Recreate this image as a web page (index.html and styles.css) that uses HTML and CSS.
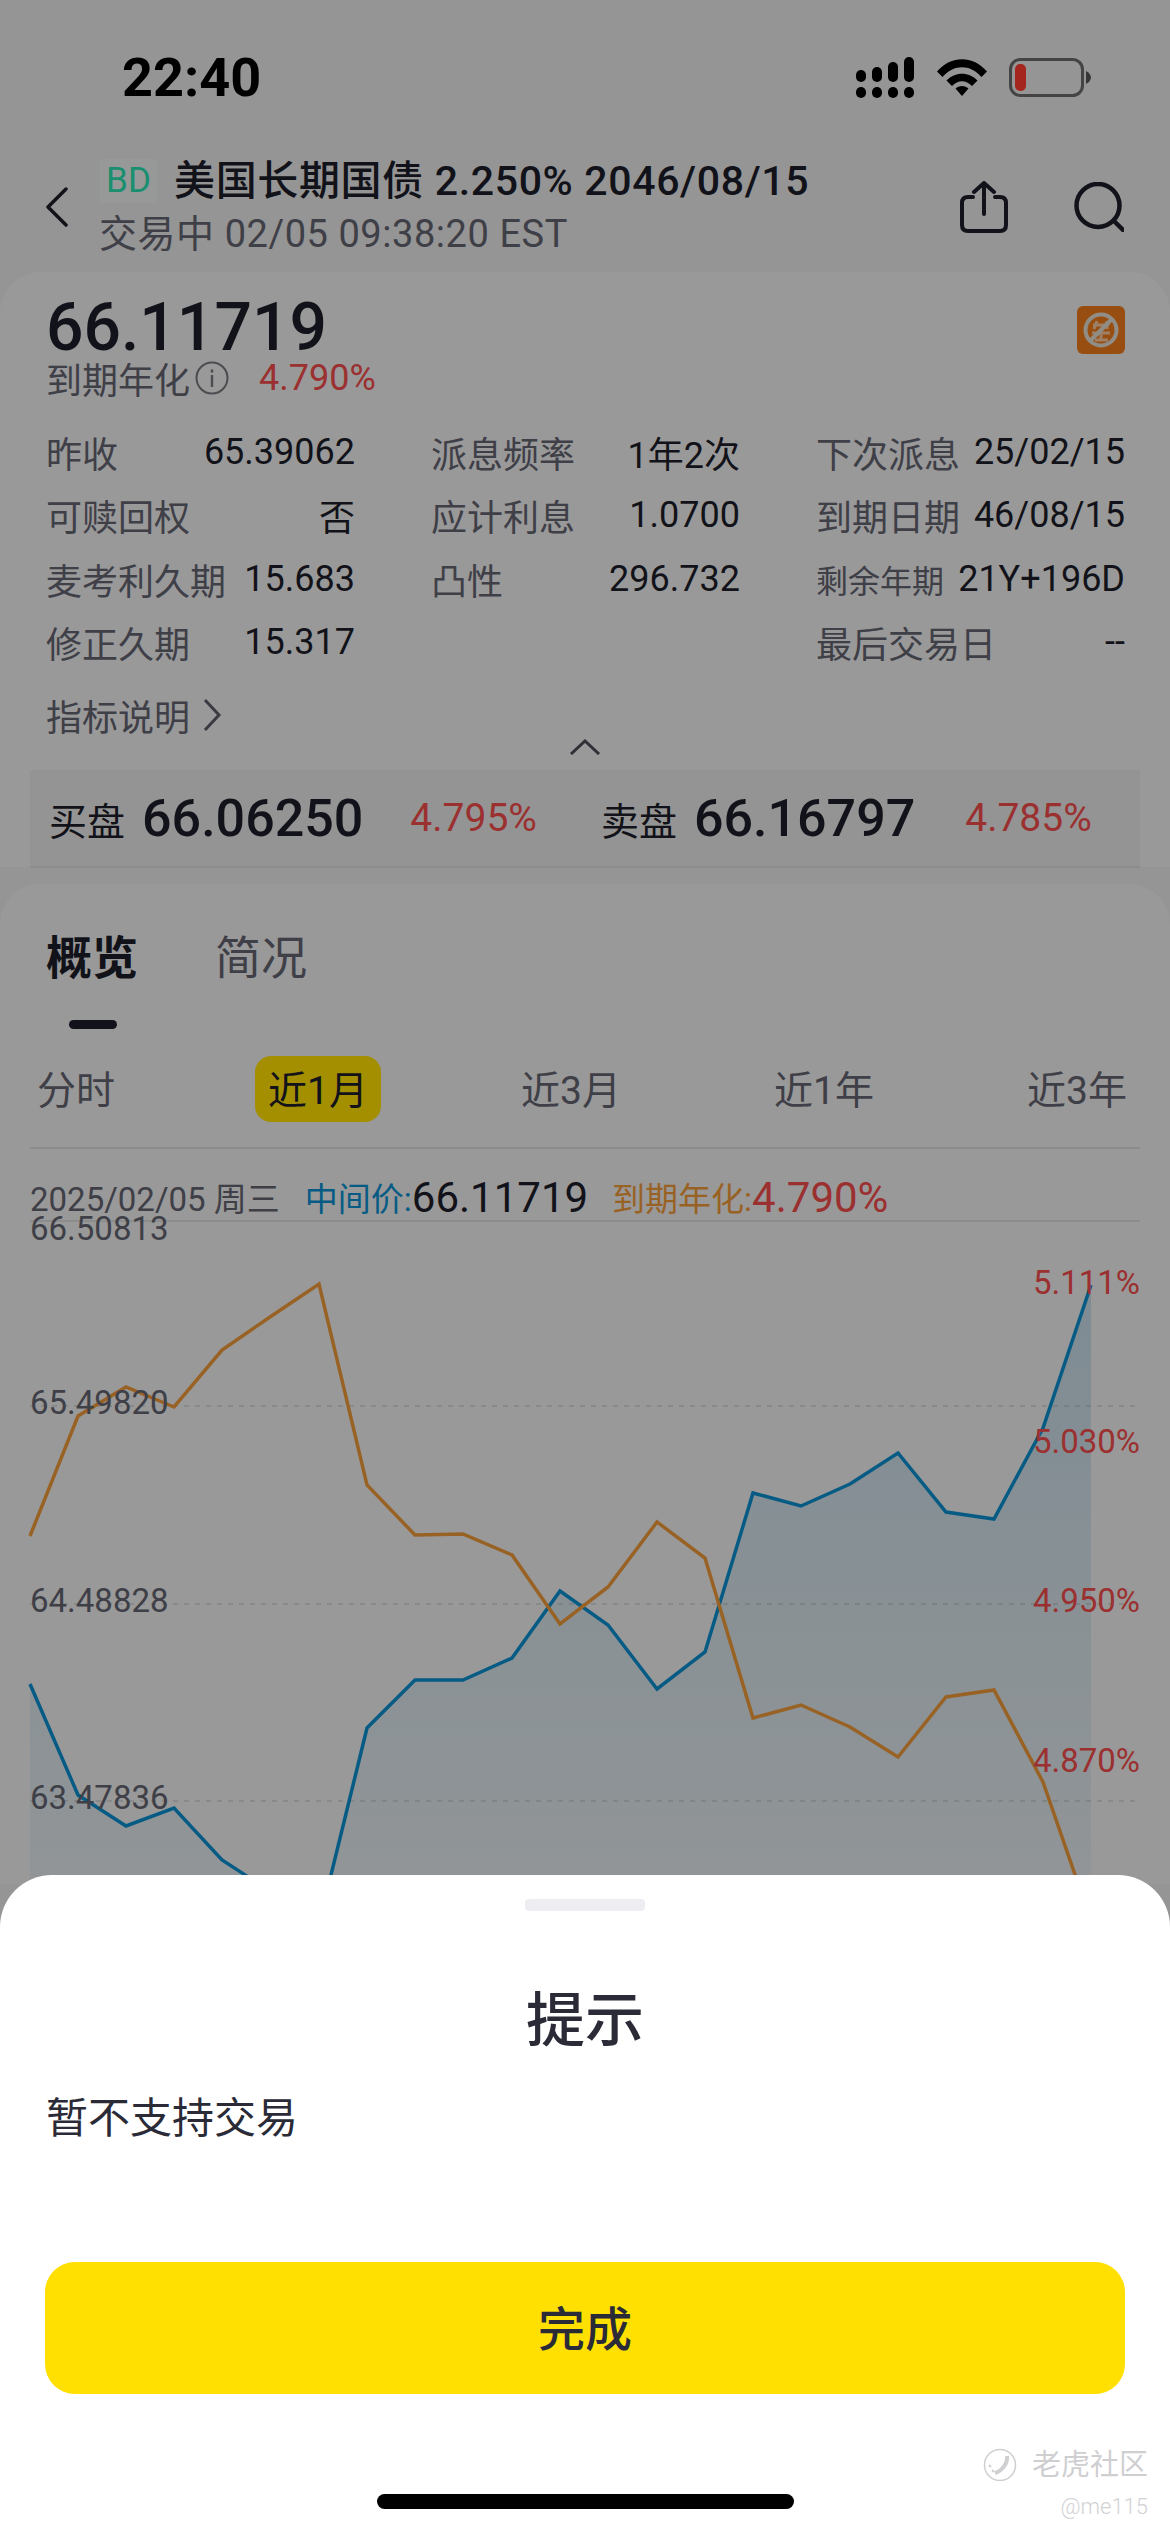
FILE: index.html
```html
<!DOCTYPE html>
<html lang="zh-CN">
<head>
  <meta charset="UTF-8">
  <title>美国长期国债 2.250% 2046/08/15</title>
  <meta name="viewport" content="width=device-width,initial-scale=1">
  <link rel="stylesheet" href="styles.css">
</head>
<body>
  <div class="status">
    <div class="time">22:40</div>
    <div class="status-icons">
      <svg class="signal" width="58" height="41" viewBox="0 0 58 41">
        <rect x="0" y="13" width="10" height="12" rx="5"/><rect x="16" y="10" width="10" height="15" rx="5"/><rect x="32" y="5" width="10" height="20" rx="5"/><rect x="48" y="0" width="10" height="25" rx="5"/>
        <rect x="0" y="30" width="10" height="11" rx="5"/><rect x="16" y="30" width="10" height="11" rx="5"/><rect x="32" y="30" width="10" height="11" rx="5"/><rect x="48" y="30" width="10" height="11" rx="5"/>
      </svg>
      <svg class="wifi" width="50" height="37" viewBox="0 0 50 37">
        <path d="M0 12.5C14 -4 36 -4 50 12.5L44.5 18C33 5 17 5 5.500 18Z"/>
        <path d="M9.500 21.500C18 12.500 32 12.500 40.500 21.500L35 27C29 20.500 21 20.500 15 27Z"/>
        <path d="M18.500 29.500C22 26 28 26 31.500 29.500L25 37Z"/>
      </svg>
      <svg class="battery" width="82" height="39" viewBox="0 0 82 39">
        <rect x="1.500" y="1.500" width="72" height="36" rx="10" fill="none" stroke="#6b6b6b" stroke-width="3"/>
        <rect x="6" y="6" width="11" height="27" rx="5" fill="#ff3b30"/>
        <path d="M77 13C80 14.500 82 17 82 19.500C82 22 80 24.500 77 26Z" fill="#555"/>
      </svg>
    </div>
  </div>

  <div class="nav">
    <svg class="back" width="22" height="40" viewBox="0 0 22 40"><path d="M20 2L2 20L20 38" fill="none" stroke="#1d1d29" stroke-width="3.500" stroke-linecap="round" stroke-linejoin="round"/></svg>
    <div class="nav-title">
      <div class="nav-name"><span class="badge">BD</span>美国长期国债 2.250% 2046/08/15</div>
      <div class="nav-sub">交易中 02/05 09:38:20 EST</div>
    </div>
    <div class="nav-actions">
      <svg class="share" width="48" height="52" viewBox="0 0 48 52" fill="none" stroke="#1d1d29" stroke-width="4" stroke-linecap="round" stroke-linejoin="round">
        <path d="M13 16H8Q2 16 2 22V44Q2 50 8 50H40Q46 50 46 44V22Q46 16 40 16H35"/>
        <path d="M24 33V2M14 11L24 2L34 11"/>
      </svg>
      <svg width="50" height="50" viewBox="0 0 50 50" fill="none" stroke="#1d1d29" stroke-width="4.500" stroke-linecap="round">
        <circle cx="24" cy="23.500" r="21.500"/>
        <path d="M41 40L49 48"/>
      </svg>
    </div>
  </div>

  <section class="quote">
    <div class="quote-top">
      <div>
        <div class="price">66.11719</div>
        <div class="ytm">
          到期年化
          <svg class="info" width="34" height="34" viewBox="0 0 34 34"><circle cx="17" cy="17" r="15.500" fill="none" stroke="#76767e" stroke-width="2"/><rect x="15.800" y="14" width="2.400" height="12" fill="#76767e"/><rect x="15.800" y="8.500" width="2.400" height="3" fill="#76767e"/></svg>
          <span class="red ytm-val">4.790%</span>
        </div>
      </div>
      <svg class="no-trade" width="48" height="48" viewBox="0 0 48 48">
        <rect width="48" height="48" rx="6" fill="#ef7a1c"/>
        <path d="M16 19h16M20 15l-3 8M30 15v8M15 27h18M24 24v11M18 34h13" fill="none" stroke="#f6c9a0" stroke-width="3"/>
        <circle cx="24" cy="24" r="15.500" fill="none" stroke="#e2dcd2" stroke-width="4"/>
        <path d="M13 35L35 13" stroke="#e2dcd2" stroke-width="4"/>
      </svg>
    </div>

    <div class="stats">
      <div class="stat"><span>昨收</span><b>65.39062</b></div>
      <div class="stat"><span>派息频率</span><b>1年2次</b></div>
      <div class="stat"><span>下次派息</span><b>25/02/15</b></div>
      <div class="stat"><span>可赎回权</span><b>否</b></div>
      <div class="stat"><span>应计利息</span><b>1.0700</b></div>
      <div class="stat"><span>到期日期</span><b>46/08/15</b></div>
      <div class="stat"><span>麦考利久期</span><b>15.683</b></div>
      <div class="stat"><span>凸性</span><b>296.732</b></div>
      <div class="stat"><span class="tight">剩余年期</span><b>21Y+196D</b></div>
      <div class="stat"><span>修正久期</span><b>15.317</b></div>
      <div class="stat"></div>
      <div class="stat"><span>最后交易日</span><b>--</b></div>
    </div>

    <div class="explain">
      指标说明
      <svg width="20" height="34" viewBox="0 0 20 34"><path d="M3 2L17 17L3 32" fill="none" stroke="#5c5c68" stroke-width="3"/></svg>
    </div>
    <div class="collapse">
      <svg width="32" height="16" viewBox="0 0 32 16"><path d="M2 15L16 2L30 15" fill="none" stroke="#4b4b57" stroke-width="3"/></svg>
    </div>

    <div class="bidask">
      <span class="ba-label">买盘</span><span class="ba-price">66.06250</span><span class="red ba-yield">4.795%</span>
      <span class="ba-label ba-sell">卖盘</span><span class="ba-price">66.16797</span><span class="red ba-yield">4.785%</span>
    </div>
  </section>

  <section class="detail">
    <div class="tabs">
      <div class="tab active">概览</div>
      <div class="tab">简况</div>
    </div>
    <div class="tab-bar"></div>
    <div class="ranges">
      <div class="range">分时</div>
      <div class="range active">近1月</div>
      <div class="range">近3月</div>
      <div class="range">近1年</div>
      <div class="range">近3年</div>
    </div>
    <div class="legend">
      <span class="legend-date">2025/02/05 周三</span>
      <span class="blue legend-key">中间价:</span><span class="legend-val">66.11719</span>
      <span class="orange legend-key legend-second">到期年化:</span><span class="legend-val red">4.790%</span>
    </div>

    <!-- coords are page px minus the chart origin (30, 1222) -->
    <svg class="chart" width="1110" height="660" viewBox="0 0 1110 660">
      <defs>
        <linearGradient id="fillBlue" x1="0" y1="0" x2="0" y2="1">
          <stop offset="0" stop-color="#0a7fc0" stop-opacity=".18"/>
          <stop offset="1" stop-color="#0a7fc0" stop-opacity=".04"/>
        </linearGradient>
      </defs>
      <path class="grid-line" d="M0 184H1110M0 382H1110M0 579H1110"/>
      <polygon fill="url(#fillBlue)" points="0,462 48,573 96,604 144,586 192,638 240,669 289,702 337,506 385,458 433,458 482,436 530,369 578,403 627,467 675,430 723,271 771,284 820,262 868,231 916,290 964,297 1013,206 1061,63 1061,660 0,660"/>
      <polyline class="line-blue" points="0,462 48,573 96,604 144,586 192,638 240,669 289,702 337,506 385,458 433,458 482,436 530,369 578,403 627,467 675,430 723,271 771,284 820,262 868,231 916,290 964,297 1013,206 1061,63"/>
      <polyline class="line-orange" points="0,314 48,194 96,165 144,185 192,128 240,95 289,62 337,263 385,313 433,312 482,333 530,402 578,365 627,300 675,336 723,496 771,483 820,505 868,535 916,475 964,468 1013,560 1061,699"/>
      <text class="axis-left" x="0" y="18">66.50813</text>
      <text class="axis-left" x="0" y="192">65.49820</text>
      <text class="axis-left" x="0" y="390">64.48828</text>
      <text class="axis-left" x="0" y="587">63.47836</text>
      <text class="axis-right" x="1110" y="72">5.111%</text>
      <text class="axis-right" x="1110" y="231">5.030%</text>
      <text class="axis-right" x="1110" y="390">4.950%</text>
      <text class="axis-right" x="1110" y="550">4.870%</text>
    </svg>
  </section>

  <div class="dim"></div>

  <div class="sheet">
    <div class="handle"></div>
    <div class="sheet-title">提示</div>
    <div class="sheet-text">暂不支持交易</div>
    <button class="done"><span>完成</span></button>
    <div class="home"></div>
  </div>

  <div class="watermark">
    <div class="wm-brand">
      <svg width="34" height="34" viewBox="0 0 34 34" fill="none" stroke="#cfcfd2"><circle cx="17" cy="17" r="15.500" stroke-width="1.500"/><path d="M24 8C25 15 19 23 12 25" stroke-width="4"/><path d="M6 17l2 2M9 22l2 2" stroke-width="2"/></svg>
      老虎社区
    </div>
    <div class="wm-user">@me115</div>
  </div>
</body>
</html>
```

FILE: styles.css
```css
* { box-sizing:border-box; margin:0; padding:0; }
html, body { width:1170px; height:2532px; overflow:hidden; }
body { position:relative; background:#e9e9e9; color:#1d1d29; font-family:Roboto,"Noto Sans CJK SC",sans-serif; }

.red { color:#f24c4c; }
.blue { color:#0a8fd0; }
.orange { color:#f09a3a; }

.status { height:156px; padding:52px 79px 0 122px; display:flex; justify-content:space-between; align-items:flex-start; color:#000; }
.time { font-size:54px; line-height:52px; font-weight:700; }
.status-icons { display:flex; align-items:flex-start; padding-top:5px; }
.status-icons svg { fill:#000; }
.wifi { margin:2px 22px 0 23px; }
.battery { margin-top:1px; }

.nav { height:116px; padding:0 46px; display:flex; align-items:center; }
.back { margin-top:-14px; }
.nav-title { margin:-14px 0 0 32px; flex:1; }
.nav-name { display:flex; align-items:center; height:46px; margin-top:-3px; font-size:41px; font-weight:500; letter-spacing:.65px; white-space:pre; }
.badge { width:57px; height:44px; margin:8px 17px 0 0; background:#ecf0ee; color:#2ae0b0; font-size:35px; font-weight:400; letter-spacing:0; text-align:center; line-height:44px; }
.nav-sub { margin:11px 0 0 -1px; font-size:38px; letter-spacing:.55px; line-height:46px; color:#63636f; }
.nav-actions { display:flex; align-items:flex-start; gap:66px; margin-top:-14px; }
.share { margin-top:-1px; }

.quote { height:595px; padding:28px 46px 0; background:#efefef; border-radius:40px 40px 0 0; }
.quote-top { display:flex; justify-content:space-between; align-items:flex-start; }
.no-trade { margin-top:6px; margin-right:-1px; }
.price { font-size:66px; line-height:56px; font-weight:500; }
.ytm { display:flex; align-items:center; height:44px; font-size:36px; color:#63636f; }
.info { margin-left:5px; }
.ytm-val { margin-left:30px; font-size:36px; }

.stats { margin-top:20px; display:grid; grid-template-columns:repeat(3,309px); column-gap:76px; grid-auto-rows:63.5px; }
.stat { display:flex; justify-content:space-between; align-items:center; font-size:36px; color:#63636f; white-space:nowrap; }
.stat b { font-weight:400; font-size:36px; color:#1d1d29; }
.stat .tight { font-size:32px; }

.explain { margin:19px 0 2px; height:44px; display:flex; align-items:center; gap:12px; font-size:36px; color:#63636f; }
.collapse { height:16px; display:flex; justify-content:center; }
.collapse svg { display:block; }
.bidask { margin:15px -16px 0; height:98px; padding:0 19px; display:flex; align-items:center; background:#e8e8e8; border-bottom:2px solid #dcdcdc; }
.ba-label { font-size:38px; }
.ba-price { margin-left:17px; font-size:52px; font-weight:500; }
.ba-yield { margin-left:47px; font-size:39px; }
.ba-sell { margin-left:64px; }
.ba-sell ~ .ba-yield { margin-left:50px; }

.detail { margin-top:17px; height:1000px; padding:0 30px; background:#efefef; border-radius:40px 40px 0 0; }
.tabs { display:flex; gap:77px; padding:46px 16px 0; }
.tab { font-size:46px; line-height:56px; color:#63636f; }
.tab.active { font-weight:700; color:#1d1d29; }
.tab-bar { width:48px; height:9px; margin:34px 0 0 39px; border-radius:5px; background:#1d1d29; }
.ranges { margin-top:27px; height:93px; padding-left:7px; display:flex; gap:127px; align-items:flex-start; border-bottom:2px solid #dcdcdc; }
.range { width:126px; height:66px; padding-bottom:4px; display:flex; align-items:center; justify-content:center; font-size:39px; color:#63636f; border-radius:16px; white-space:nowrap; }
.range.active { background:#ffe000; color:#1d1d29; }
.range:first-child { width:78px; margin-right:13px; }
.legend { height:73px; padding-top:25px; display:flex; align-items:center; font-size:33px; color:#63636f; white-space:nowrap; border-bottom:2px solid #dcdcdc; }
.legend-key { margin-left:25px; }
.legend-second { margin-left:24px; }
.legend-val { font-size:42px; color:#1d1d29; }
.legend-val.red { color:#f24c4c; }

.chart { display:block; overflow:visible; }
.grid-line { stroke:#d6d6d6; stroke-width:2; stroke-dasharray:5 6; fill:none; }
.line-blue { fill:none; stroke:#0a8fd0; stroke-width:3.5; }
.line-orange { fill:none; stroke:#f09a3a; stroke-width:3.5; }
.axis-left { font-size:33px; fill:#63636f; }
.axis-right { font-size:33px; fill:#f24c4c; text-anchor:end; }

.dim { position:absolute; inset:0; background:rgba(0,0,0,.36); }

.sheet { position:absolute; left:0; right:0; bottom:0; height:657px; padding:24px 45px 0; background:#fff; border-radius:52px 52px 0 0; display:flex; flex-direction:column; }
.handle { width:120px; height:12px; margin:0 auto; border-radius:4px; background:#eeeef2; }
.sheet-title { margin-top:75px; text-align:center; font-size:59px; line-height:70px; font-weight:500; color:#2b2b38; }
.sheet-text { margin-top:37px; padding-left:1px; font-size:42px; line-height:52px; color:#2b2b38; }
.done { margin-top:117px; height:132px; padding-bottom:5px; border:none; border-radius:30px; background:#ffe000; color:#2b2b38; font-family:inherit; font-size:47px; font-weight:500; }
.home { width:417px; height:15px; margin:100px auto 0; border-radius:8px; background:#000; }

.watermark { position:absolute; right:22px; top:2448px; display:flex; flex-direction:column; align-items:flex-end; color:#cfcfd2; }
.wm-brand { display:flex; align-items:center; gap:15px; font-size:29px; line-height:34px; }
.wm-user { margin-top:11px; font-size:22px; font-weight:300; line-height:28px; color:#d2d2d5; }
```
